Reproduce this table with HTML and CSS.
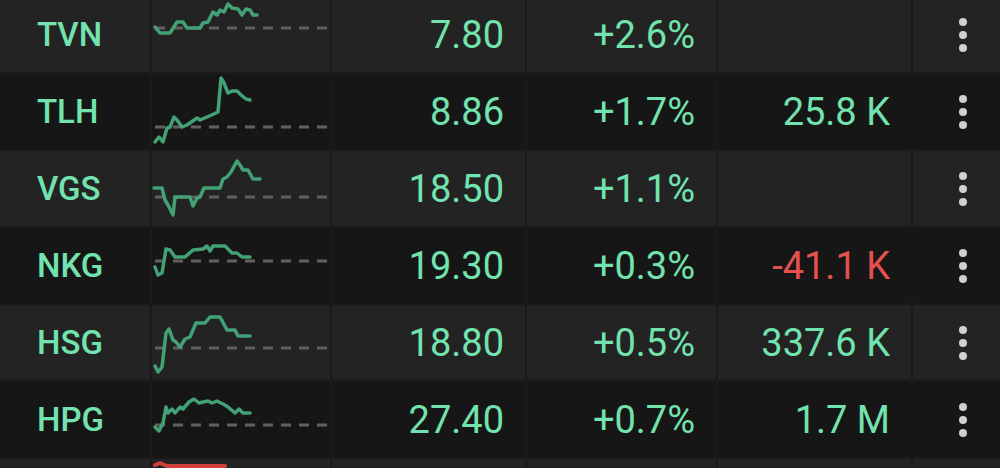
FILE: index.html
```html
<!DOCTYPE html>
<html>
<head>
<meta charset="utf-8">
<link rel="stylesheet" href="styles.css">
</head>
<body>
<div class="table">
  <div class="row light">
    <div class="cell sym">TVN</div>
    <div class="cell spark"><svg viewBox="0 0 178 75" width="178" height="75"><line class="base" x1="3" y1="31" x2="176" y2="31"/><polyline class="up" points="3,30 8,36 18,36 25,25 31,25 35,31 48,31 51,26 56,25 61,15 65,18 68,13 72,15 76,7 80,11 86,12 90,18 94,12 98,13 101,18 105,18"/></svg></div>
    <div class="cell num">7.80</div>
    <div class="cell num">+2.6%</div>
    <div class="cell num"></div>
    <div class="cell menu"><span class="dots"><i></i><i></i><i></i></span></div>
  </div>
  <div class="row dark">
    <div class="cell sym">TLH</div>
    <div class="cell spark"><svg viewBox="0 0 178 75" width="178" height="75"><line class="base" x1="3" y1="53" x2="176" y2="53"/><polyline class="up" points="3,68 7,63 11,68 15,54 18,53 22,43 25,46 30,53 35,51 45,44 48,46 55,43 66,38 69,4 72,9 76,19 80,17 85,17 89,21 94,25 98,26"/></svg></div>
    <div class="cell num">8.86</div>
    <div class="cell num">+1.7%</div>
    <div class="cell num">25.8 K</div>
    <div class="cell menu"><span class="dots"><i></i><i></i><i></i></span></div>
  </div>
  <div class="row light">
    <div class="cell sym">VGS</div>
    <div class="cell spark"><svg viewBox="0 0 178 75" width="178" height="75"><line class="base" x1="3" y1="46" x2="176" y2="46"/><polyline class="up" points="2,37 10,37 13,49 16,54 21,64 23,46 38,46 41,55 45,47 48,46 52,37 68,37 71,28 75,26 79,21 85,10 88,14 91,19 96,19 101,28 108,28"/></svg></div>
    <div class="cell num">18.50</div>
    <div class="cell num">+1.1%</div>
    <div class="cell num"></div>
    <div class="cell menu"><span class="dots"><i></i><i></i><i></i></span></div>
  </div>
  <div class="row dark">
    <div class="cell sym">NKG</div>
    <div class="cell spark"><svg viewBox="0 0 178 75" width="178" height="75"><line class="base" x1="3" y1="33" x2="176" y2="33"/><polyline class="up" points="3,39 6,47 10,45 14,21 18,22 23,29 33,29 41,22 51,21 55,18 58,23 61,18 73,18 80,25 85,25 90,29 98,29"/></svg></div>
    <div class="cell num">19.30</div>
    <div class="cell num">+0.3%</div>
    <div class="cell num neg">-41.1 K</div>
    <div class="cell menu"><span class="dots"><i></i><i></i><i></i></span></div>
  </div>
  <div class="row light">
    <div class="cell sym">HSG</div>
    <div class="cell spark"><svg viewBox="0 0 178 75" width="178" height="75"><line class="base" x1="3" y1="43" x2="176" y2="43"/><polyline class="up" points="3,61 6,67 10,62 14,28 17,24 21,35 24,37 28,42 33,34 38,32 44,18 53,18 58,12 68,12 75,25 83,25 86,31 98,31"/></svg></div>
    <div class="cell num">18.80</div>
    <div class="cell num">+0.5%</div>
    <div class="cell num">337.6 K</div>
    <div class="cell menu"><span class="dots"><i></i><i></i><i></i></span></div>
  </div>
  <div class="row dark">
    <div class="cell sym">HPG</div>
    <div class="cell spark"><svg viewBox="0 0 178 75" width="178" height="75"><line class="base" x1="3" y1="43" x2="176" y2="43"/><polyline class="up" points="3,45 7,49 11,41 14,25 16,31 20,27 23,31 28,25 31,27 37,20 42,17 47,21 51,20 56,19 60,21 65,19 71,22 76,25 83,31 87,27 91,31 98,31"/></svg></div>
    <div class="cell num">27.40</div>
    <div class="cell num">+0.7%</div>
    <div class="cell num">1.7 M</div>
    <div class="cell menu"><span class="dots"><i></i><i></i><i></i></span></div>
  </div>
  <div class="row light">
    <div class="cell sym"></div>
    <div class="cell spark"><svg viewBox="0 0 178 75" width="178" height="75"><polyline class="down" points="3,6 8,4 15,7 73,7"/></svg></div>
    <div class="cell num"></div>
    <div class="cell num"></div>
    <div class="cell num"></div>
    <div class="cell menu"></div>
  </div>
</div>
</body>
</html>
```

FILE: styles.css
```css
html, body {
  margin: 0;
  padding: 0;
  background: #1a1a1a;
  overflow: hidden;
  width: 1000px;
  height: 468px;
}

.table {
  display: flex;
  flex-direction: column;
  gap: 2px;
  margin-top: -3px;
  background: #1a1a1a;
  font-family: Roboto, "Liberation Sans", sans-serif;
}

.row {
  display: grid;
  grid-template-columns: 150px 178px 193px 189px 193px 1fr;
  column-gap: 2px;
  height: 75px;
}

.cell {
  display: flex;
  align-items: center;
  height: 75px;
}

.light .cell { background: #232323; }
.dark .cell { background: #161616; }

.sym {
  padding-left: 37px;
  font-size: 33px;
  font-weight: 500;
  color: #72e3af;
}

.num {
  justify-content: flex-end;
  padding-right: 21px;
  font-size: 38px;
  color: #72e3af;
}

.num.neg { color: #e5514f; }

.spark svg { display: block; }

.base {
  stroke: #606060;
  stroke-width: 3;
  stroke-dasharray: 10 8;
}

.up, .down {
  fill: none;
  stroke-width: 3.5;
  stroke-linejoin: round;
  stroke-linecap: round;
}

.up { stroke: #42a275; }
.down { stroke: #d2403c; stroke-width: 4; }

.menu { padding-left: 46px; }

.dots {
  display: flex;
  flex-direction: column;
  gap: 5px;
}

.dots i {
  display: block;
  width: 8px;
  height: 8px;
  border-radius: 50%;
  background: #d0d0d0;
}
```
